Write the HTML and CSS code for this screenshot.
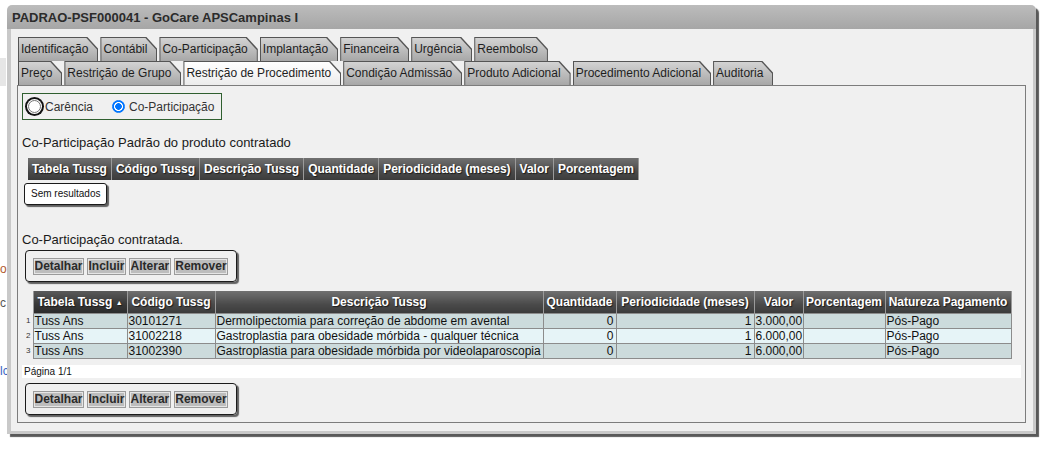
FILE: index.html
```html
<!DOCTYPE html>
<html lang="pt-BR">
<head>
	<meta charset="UTF-8">
	<title>PADRAO-PSF000041 - GoCare APSCampinas I</title>
	<link rel="stylesheet" href="styles.css">
</head>
<body>
	<!-- pagina por tras da janela -->
	<div class="bg-strip"></div>
	<span class="bg-text bg-text-a">o</span>
	<span class="bg-text bg-text-b">c</span>
	<span class="bg-text bg-text-c">lc</span>

	<div class="dialog">
		<div class="dialog-title">PADRAO-PSF000041 - GoCare APSCampinas I</div>

		<div class="dialog-body">
			<ul class="tabs">
				<li class="tab"><span>Identificação</span></li>
				<li class="tab"><span>Contábil</span></li>
				<li class="tab"><span>Co-Participação</span></li>
				<li class="tab"><span>Implantação</span></li>
				<li class="tab"><span>Financeira</span></li>
				<li class="tab"><span>Urgência</span></li>
				<li class="tab"><span>Reembolso</span></li>
			</ul>
			<ul class="tabs">
				<li class="tab"><span>Preço</span></li>
				<li class="tab"><span>Restrição de Grupo</span></li>
				<li class="tab active"><span>Restrição de Procedimento</span></li>
				<li class="tab"><span>Condição Admissão</span></li>
				<li class="tab"><span>Produto Adicional</span></li>
				<li class="tab"><span>Procedimento Adicional</span></li>
				<li class="tab"><span>Auditoria</span></li>
			</ul>

			<div class="tab-panel">
				<!-- tipo -->
				<div class="choice">
					<input class="radio focused" type="radio" name="tipo" id="carencia">
					<label for="carencia">Carência</label>
					<input class="radio" type="radio" name="tipo" id="copart" checked>
					<label for="copart">Co-Participação</label>
				</div>

				<h3 class="section-title">Co-Participação Padrão do produto contratado</h3>

				<table class="grid grid-default">
					<thead>
						<tr>
							<th>Tabela Tussg</th>
							<th>Código Tussg</th>
							<th>Descrição Tussg</th>
							<th>Quantidade</th>
							<th>Periodicidade (meses)</th>
							<th>Valor</th>
							<th>Porcentagem</th>
						</tr>
					</thead>
				</table>
				<div class="note">Sem resultados</div>

				<h3 class="section-title contracted">Co-Participação contratada.</h3>

				<div class="toolbar">
					<button>Detalhar</button>
					<button>Incluir</button>
					<button>Alterar</button>
					<button>Remover</button>
				</div>

				<!-- lista contratada -->
				<table class="grid grid-list">
					<colgroup>
						<col class="c-row">
						<col class="c-tabela">
						<col class="c-codigo">
						<col class="c-desc">
						<col class="c-qtd">
						<col class="c-per">
						<col class="c-valor">
						<col class="c-porc">
						<col class="c-nat">
					</colgroup>
					<thead>
						<tr>
							<th class="rownum"></th>
							<th class="sorted">Tabela Tussg <span class="arrow">▲</span></th>
							<th>Código Tussg</th>
							<th>Descrição Tussg</th>
							<th>Quantidade</th>
							<th>Periodicidade (meses)</th>
							<th>Valor</th>
							<th>Porcentagem</th>
							<th>Natureza Pagamento</th>
						</tr>
					</thead>
					<tbody>
						<tr class="odd">
							<td class="rownum">1</td>
							<td>Tuss Ans</td>
							<td>30101271</td>
							<td>Dermolipectomia para correção de abdome em avental</td>
							<td class="num">0</td>
							<td class="num">1</td>
							<td>3.000,00</td>
							<td></td>
							<td>Pós-Pago</td>
						</tr>
						<tr class="even">
							<td class="rownum">2</td>
							<td>Tuss Ans</td>
							<td>31002218</td>
							<td>Gastroplastia para obesidade mórbida - qualquer técnica</td>
							<td class="num">0</td>
							<td class="num">1</td>
							<td>6.000,00</td>
							<td></td>
							<td>Pós-Pago</td>
						</tr>
						<tr class="odd">
							<td class="rownum">3</td>
							<td>Tuss Ans</td>
							<td>31002390</td>
							<td>Gastroplastia para obesidade mórbida por videolaparoscopia</td>
							<td class="num">0</td>
							<td class="num">1</td>
							<td>6.000,00</td>
							<td></td>
							<td>Pós-Pago</td>
						</tr>
					</tbody>
				</table>

				<div class="pager">Página 1/1</div>

				<div class="toolbar toolbar-bottom">
					<button>Detalhar</button>
					<button>Incluir</button>
					<button>Alterar</button>
					<button>Remover</button>
				</div>
			</div>
		</div>
	</div>
</body>
</html>
```

FILE: styles.css
```css
html,
body {
	margin: 0;
	padding: 0;
	background: #fff;
	font-family: "Liberation Sans", Arial, sans-serif;
}

body {
	position: relative;
	height: 457px;
	overflow: hidden;
}

* {
	box-sizing: border-box;
}

/* pagina de fundo */
.bg-strip {
	position: absolute;
	left: 0;
	top: 58px;
	width: 6px;
	height: 28px;
	background: #e6e6e6;
}

.bg-text {
	position: absolute;
	left: 0;
	font-size: 12px;
	line-height: 14px;
	color: #555;
}

.bg-text-a {
	top: 262px;
	color: #b0582c;
}

.bg-text-b {
	top: 296px;
}

.bg-text-c {
	top: 364px;
	color: #3a63c4;
}

/* janela */
.dialog {
	position: relative;
	width: 1029px;
	margin: 5px 0 0 7px;
	border-radius: 5px 5px 0 0;
	box-shadow: 3px 3px 1px rgba(0, 0, 0, 0.65);
}

.dialog-title {
	height: 24px;
	line-height: 25px;
	padding-left: 5px;
	border-radius: 5px 5px 0 0;
	background: linear-gradient(#bcbcbc, #a6a6a6);
	font-size: 13px;
	font-weight: bold;
	color: #2b2b2b;
}

.dialog-body {
	background: #f0f0f0;
	border: 4px solid #c9c9c9;
	border-top: 0;
	border-right-width: 3px;
	border-bottom-width: 3px;
	padding: 8px 7px 8px 6px;
}

/* abas */
.tabs {
	display: flex;
	gap: 2px;
	list-style: none;
	margin: 0;
	padding: 0 0 0 1px;
	height: 24px;
}

.tab {
	padding: 1px 1px 0 1px;
	background: #555;
	clip-path: polygon(0 0, calc(100% - 11px) 0, 100% 12px, 100% 100%, 0 100%);
	font-size: 12px;
	color: #1e1e1e;
}

.tab span {
	display: block;
	height: 23px;
	line-height: 23px;
	padding: 0 9px 0 2px;
	background: linear-gradient(#d3d3d3, #a7a7a7);
	clip-path: polygon(0 0, calc(100% - 11px) 0, 100% 12px, 100% 100%, 0 100%);
	white-space: nowrap;
}

.tab.active span {
	background: linear-gradient(#fff, #ececec);
}

.tab-panel {
	border: 1px solid #7c7c7c;
	padding: 7px 4px 7px;
}

/* carencia / co-participacao */
.choice {
	display: flex;
	align-items: center;
	width: fit-content;
	height: 27px;
	padding: 0 7px 0 5px;
	border: 1px solid #2f5f2f;
	font-size: 12px;
	color: #333;
}

.radio {
	appearance: none;
	-webkit-appearance: none;
	width: 13px;
	height: 13px;
	margin: 0 4px 0 0;
	border: 1px solid #767676;
	border-radius: 50%;
	background: #fff;
}

.radio.focused {
	box-shadow: 0 0 0 1px #fff, 0 0 0 3px #111;
}

.radio:checked {
	border-color: #0075ff;
	background: radial-gradient(circle, #0075ff 0 3px, #fff 3.6px 4.2px, #0075ff 4.8px);
}

.choice label + .radio {
	margin-left: 19px;
}

.section-title {
	margin: 15px 0 8px;
	font-size: 13px;
	font-weight: normal;
	line-height: 15px;
	color: #1a1a1a;
}

.section-title.contracted {
	margin: 27px 0 3px;
}

/* grades */
.grid {
	border-collapse: collapse;
	font-size: 12px;
}

.grid th {
	height: 22px;
	padding: 0 4px;
	border-left: 1px solid #9a9a9a;
	background: linear-gradient(#707070, #4b4b4b 60%, #3b3b3b);
	color: #fff;
	font-weight: bold;
	text-shadow: 1px 1px 1px #1a1a1a;
	white-space: nowrap;
}

.grid th:first-child {
	border-left: 0;
}

.grid th:last-child {
	border-right: 1px solid #9a9a9a;
}

.grid-default {
	margin-left: 6px;
}

.grid-list {
	table-layout: fixed;
	width: 985px;
	margin: 9px 0 0 4px;
}

.grid-list th {
	padding: 0 2px;
}

.grid-list th.rownum {
	background: none;
	border: 0;
}

.grid-list th.sorted {
	background: linear-gradient(#5a5a5a, #383838 60%, #2b2b2b);
}

.arrow {
	font-size: 7px;
	vertical-align: 1px;
}

.c-row { width: 7px; }
.c-tabela { width: 94px; }
.c-codigo { width: 88px; }
.c-desc { width: 328px; }
.c-qtd { width: 73px; }
.c-per { width: 138px; }
.c-valor { width: 49px; }
.c-porc { width: 82px; }
.c-nat { width: 126px; }

.grid td {
	height: 15px;
	padding: 0 1px;
	line-height: 14px;
	border: 1px solid #8c8c8c;
	color: #111;
	white-space: nowrap;
	overflow: hidden;
}

.grid tr.odd td {
	background: #ccdbdc;
}

.grid tr.even td {
	background: #e6f4f7;
}

.grid td.num {
	text-align: right;
	padding-right: 2px;
}

.grid tr td.rownum {
	padding: 0;
	border: 0;
	background: #f0f0f0;
	font-size: 8px;
	color: #333;
	text-align: left;
}

.note {
	width: fit-content;
	margin: 3px 0 0 2px;
	padding: 0 6px;
	height: 22px;
	line-height: 20px;
	border: 1px solid #1b1b1b;
	border-radius: 3px;
	background: #fff;
	box-shadow: 2px 2px 1px rgba(0, 0, 0, 0.6);
	font-size: 10px;
	color: #111;
}

/* barra de botoes */
.toolbar {
	display: flex;
	gap: 3px;
	width: fit-content;
	margin-left: 3px;
	padding: 7px 8px 6px 7px;
	border: 1px solid #1b1b1b;
	border-radius: 4px;
	box-shadow: 2px 2px 1px rgba(0, 0, 0, 0.6);
}

.toolbar-bottom {
	margin-top: 5px;
}

.toolbar button {
	height: 17px;
	padding: 0 0.5px;
	border: 1px solid #9b9b9b;
	background: #bdbdbd;
	box-shadow: inset 0 0 0 1px #e6e6e6;
	font-family: inherit;
	font-size: 12px;
	font-weight: bold;
	line-height: 15px;
	color: #2a2a2a;
	cursor: pointer;
}

.pager {
	margin-top: 6px;
	height: 13px;
	line-height: 13px;
	padding-left: 2px;
	background: #fff;
	font-size: 10px;
	color: #111;
}
```
